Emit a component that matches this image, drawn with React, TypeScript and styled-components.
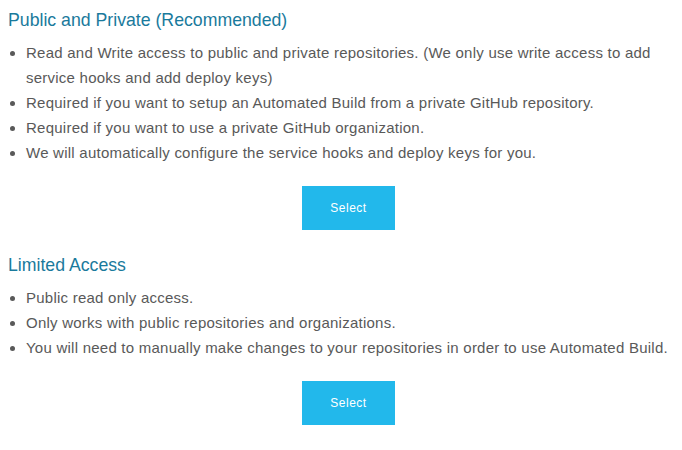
import styled, { createGlobalStyle } from "styled-components";

const GlobalStyle = createGlobalStyle`
  body {
    margin: 0;
    background: #fff;
    font-family: "Liberation Sans", Arial, sans-serif;
  }
`;

const Container = styled.div`
  padding: 10px 8px 0 8px;
`;

const Section = styled.section`
  margin-bottom: 25px;
`;

const Heading = styled.h3`
  margin: 0;
  font-size: 17.7px;
  line-height: 20px;
  font-weight: normal;
  color: #1a7a9c;
`;

const List = styled.ul`
  margin: 9.5px 0 0 0;
  padding-left: 18px;
  color: #595959;
  font-size: 15px;
  line-height: 25px;
  letter-spacing: 0.24px;
`;

const Actions = styled.div`
  display: flex;
  justify-content: center;
  padding-left: 15px;
  margin-top: 21.5px;
`;

const SelectButton = styled.button`
  width: 93px;
  height: 44px;
  border: none;
  border-radius: 0;
  background: #22b8eb;
  color: #fff;
  font-family: "Liberation Sans", Arial, sans-serif;
  font-size: 12px;
  letter-spacing: 0.5px;
  cursor: pointer;

  &:hover {
    background: #1aa6d6;
  }
`;

const options = [
  {
    title: "Public and Private (Recommended)",
    items: [
      "Read and Write access to public and private repositories. (We only use write access to add service hooks and add deploy keys)",
      "Required if you want to setup an Automated Build from a private GitHub repository.",
      "Required if you want to use a private GitHub organization.",
      "We will automatically configure the service hooks and deploy keys for you.",
    ],
  },
  {
    title: "Limited Access",
    items: [
      "Public read only access.",
      "Only works with public repositories and organizations.",
      "You will need to manually make changes to your repositories in order to use Automated Build.",
    ],
  },
];

const App = () => {
  return (
    <Container>
      <GlobalStyle />
      {options.map((option) => (
        <Section key={option.title}>
          <Heading>{option.title}</Heading>
          <List>
            {option.items.map((item) => (
              <li key={item}>{item}</li>
            ))}
          </List>
          <Actions>
            <SelectButton>Select</SelectButton>
          </Actions>
        </Section>
      ))}
    </Container>
  );
};

export default App;
